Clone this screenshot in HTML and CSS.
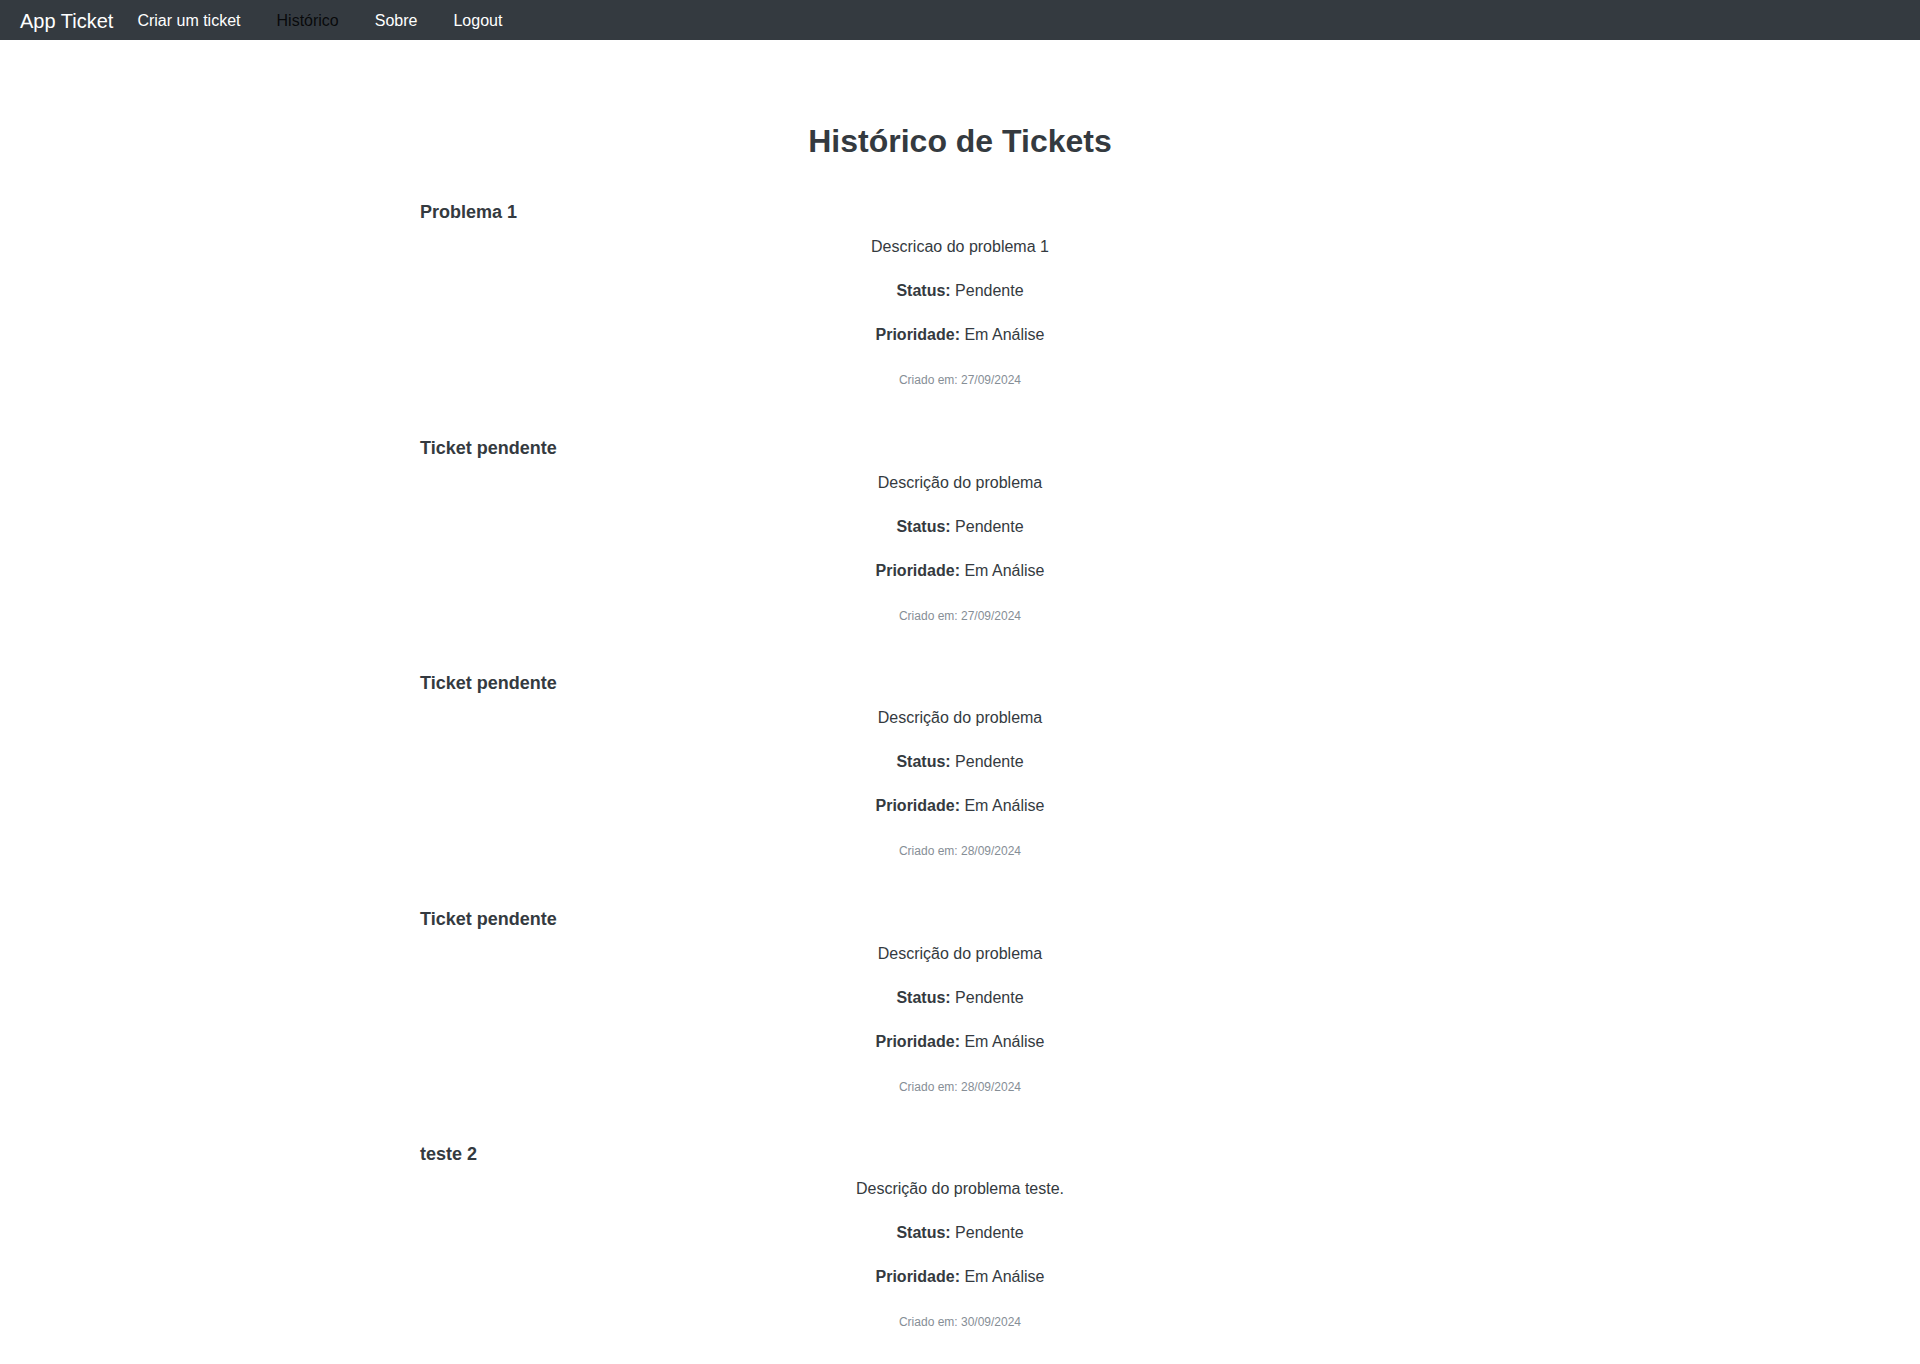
FILE: index.html
```html
<!DOCTYPE html>
<html lang="pt-BR">
<head>
<meta charset="utf-8">
<title>Histórico de Tickets</title>
<link rel="stylesheet" href="styles.css">
</head>
<body>
<nav class="navbar">
  <a class="brand" href="#">App Ticket</a>
  <ul class="nav-links">
    <li><a href="#">Criar um ticket</a></li>
    <li><a class="active" href="#">Histórico</a></li>
    <li><a href="#">Sobre</a></li>
    <li><a href="#">Logout</a></li>
  </ul>
</nav>
<main class="container">
  <h2 class="page-title">Histórico de Tickets</h2>
  <section class="ticket">
    <h3 class="ticket-title">Problema 1</h3>
    <p>Descricao do problema 1</p>
    <p><strong>Status:</strong> Pendente</p>
    <p><strong>Prioridade:</strong> Em Análise</p>
    <p><small>Criado em: 27/09/2024</small></p>
  </section>
  <section class="ticket">
    <h3 class="ticket-title">Ticket pendente</h3>
    <p>Descrição do problema</p>
    <p><strong>Status:</strong> Pendente</p>
    <p><strong>Prioridade:</strong> Em Análise</p>
    <p><small>Criado em: 27/09/2024</small></p>
  </section>
  <section class="ticket">
    <h3 class="ticket-title">Ticket pendente</h3>
    <p>Descrição do problema</p>
    <p><strong>Status:</strong> Pendente</p>
    <p><strong>Prioridade:</strong> Em Análise</p>
    <p><small>Criado em: 28/09/2024</small></p>
  </section>
  <section class="ticket">
    <h3 class="ticket-title">Ticket pendente</h3>
    <p>Descrição do problema</p>
    <p><strong>Status:</strong> Pendente</p>
    <p><strong>Prioridade:</strong> Em Análise</p>
    <p><small>Criado em: 28/09/2024</small></p>
  </section>
  <section class="ticket">
    <h3 class="ticket-title">teste 2</h3>
    <p>Descrição do problema teste.</p>
    <p><strong>Status:</strong> Pendente</p>
    <p><strong>Prioridade:</strong> Em Análise</p>
    <p><small>Criado em: 30/09/2024</small></p>
  </section>
</main>
</body>
</html>
```

FILE: styles.css
```css
* { box-sizing: border-box; }

body {
  margin: 0;
  font-family: "Liberation Sans", Arial, sans-serif;
  color: #343a40;
  background: #ffffff;
}

.navbar {
  height: 40px;
  background: #343a40;
  display: flex;
  align-items: center;
  padding: 2px 20px 0;
}

.brand {
  color: #ffffff;
  font-size: 20px;
  text-decoration: none;
  margin-right: 24px;
}

.nav-links {
  list-style: none;
  margin: 0;
  padding: 0;
  display: flex;
  gap: 36px;
}

.nav-links a {
  color: #ffffff;
  font-size: 16px;
  text-decoration: none;
}

.nav-links a.active {
  color: rgba(0, 0, 0, 0.85);
}

.container {
  width: 1080px;
  margin: 0 auto;
  padding-top: 82px;
}

.page-title {
  margin: 0 0 41px;
  font-size: 32px;
  line-height: 38px;
  font-weight: bold;
  text-align: center;
}

.ticket {
  margin-bottom: 44.5px;
}

.ticket-title {
  margin: 0 0 12px;
  font-size: 18px;
  line-height: 22px;
  font-weight: bold;
}

.ticket p {
  margin: 0 0 20px;
  font-size: 16px;
  line-height: 24px;
  text-align: center;
}

.ticket small {
  font-size: 12px;
  color: #868e96;
}
```
